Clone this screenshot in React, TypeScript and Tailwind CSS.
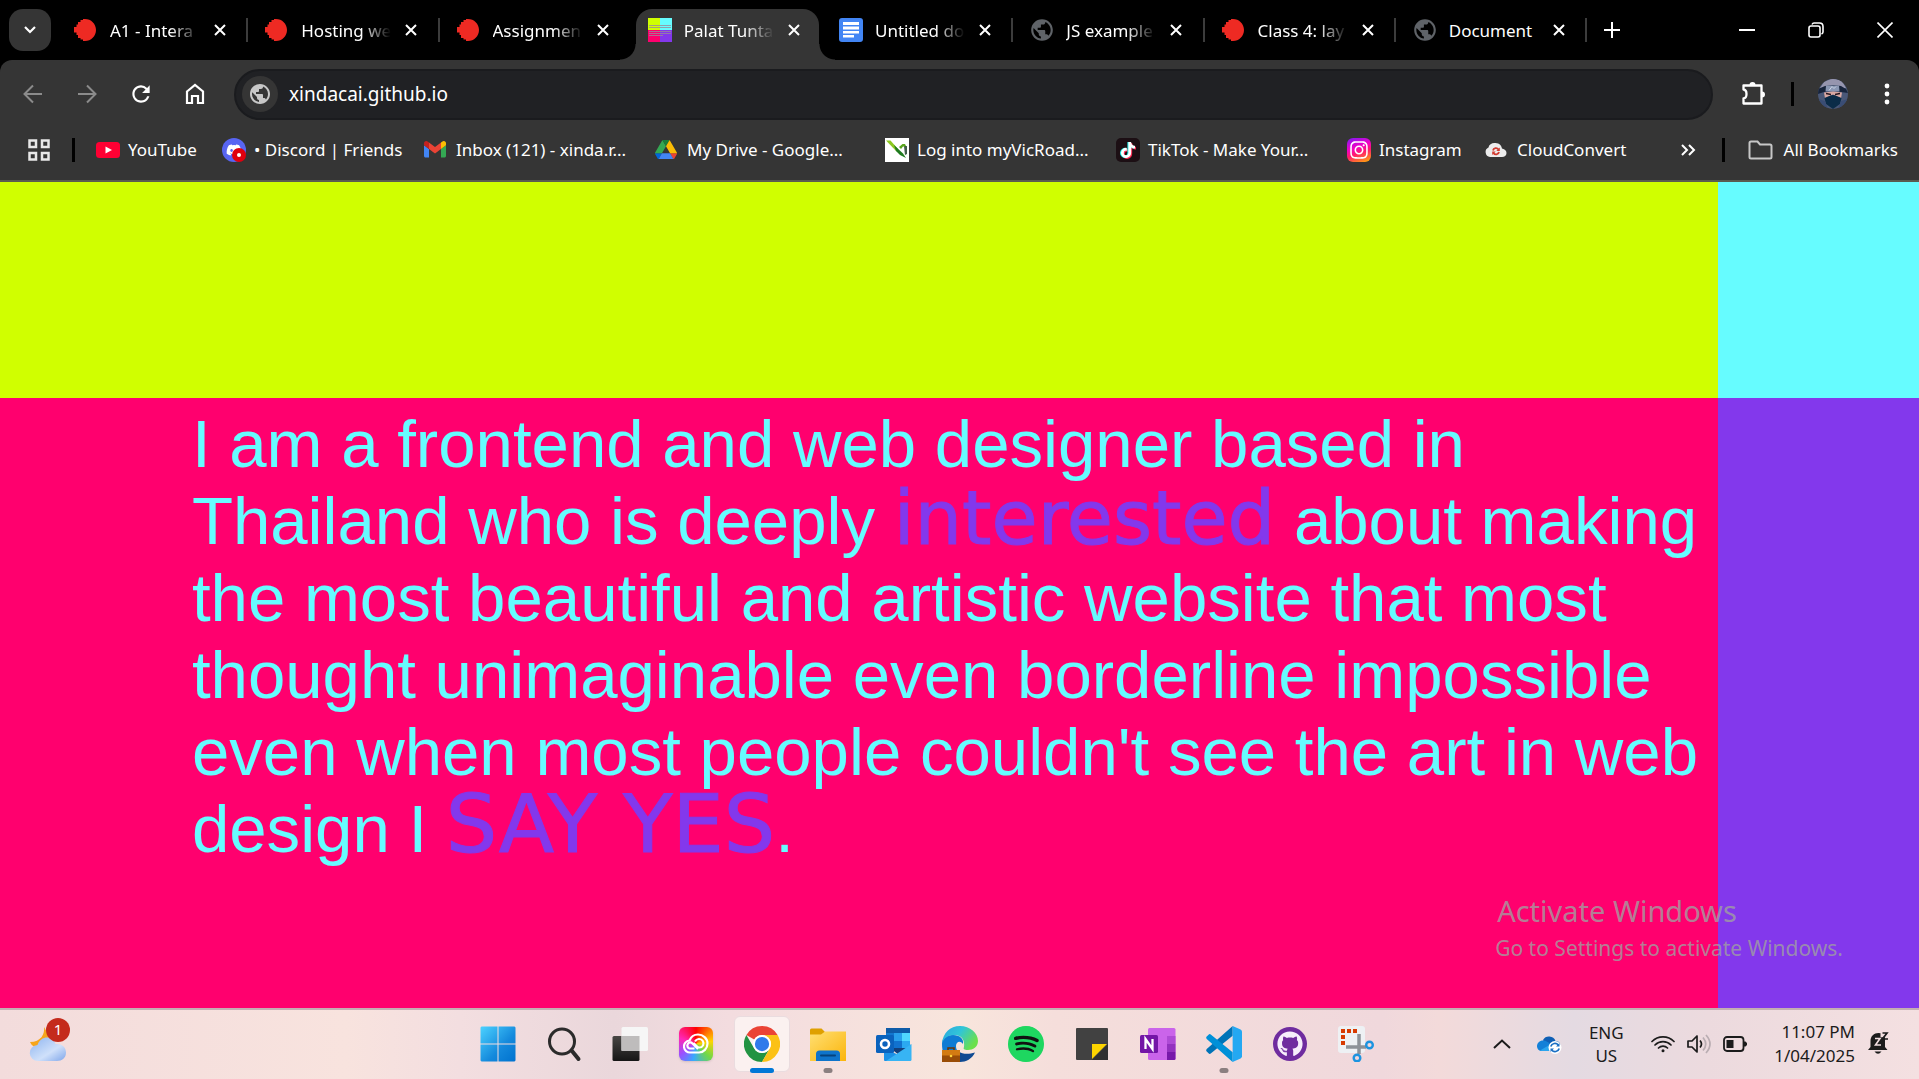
import type { ReactNode } from "react";
import { FaDiscord, FaGithub, FaInstagram, FaSpotify, FaTiktok } from "react-icons/fa";
import { MdPublic, MdRefresh } from "react-icons/md";

/* ---------- Tab favicons ---------- */

function RedBlob() {
  return (
    <svg viewBox="0 0 22 22" className="size-[22px]" aria-hidden="true">
      <path
        fill="#ee2a23"
        d="M11 0c6 0 11 4.900 11 11s-5 11-11 11h-2v-1.500H6.500V19H4v-3H2.500v-2.500H0V8h2.500V5.500H4V3h2.500V1H9V0z"
      />
    </svg>
  );
}

function PalatIcon() {
  return (
    <svg viewBox="0 0 24 24" className="size-6" aria-hidden="true">
      <path fill="#d0ff00" d="M0 0h12v12H0z" />
      <path fill="#66fcff" d="M12 0h12v12H12z" />
      <path fill="#ff006e" d="M0 12h12v12H0z" />
      <path fill="#8338ec" d="M12 12h12v12H12z" />
      <path stroke="#9a8a9a" strokeWidth="1" d="M1 7.500h22M1 9.500h22M1 13.500h22M1 15.500h22M1 17.500h14" opacity=".8" />
    </svg>
  );
}

function DocsIcon() {
  return (
    <svg viewBox="0 0 24 24" className="size-6" aria-hidden="true">
      <rect width="24" height="24" rx="3" fill="#4285f4" />
      <path fill="#fff" d="M4 4h16v3H4zM4 8.500h16v3H4zM4 13h16v2.500H4zM4 17h11v2.500H4z" />
    </svg>
  );
}

function GreyGlobe() {
  return <MdPublic className="-mx-px size-[26px] shrink-0 text-[#5f6368]" aria-hidden="true" />;
}

type Tab = { title: string; icon: ReactNode; active?: boolean; line?: boolean; short?: boolean };

const tabs: Tab[] = [
  { title: "A1 - Intera", icon: <RedBlob />, line: true },
  { title: "Hosting we", icon: <RedBlob />, line: true },
  { title: "Assignmen", icon: <RedBlob /> },
  { title: "Palat Tunta", icon: <PalatIcon />, active: true },
  { title: "Untitled do", icon: <DocsIcon />, line: true },
  { title: "JS example", icon: <GreyGlobe />, line: true },
  { title: "Class 4: lay", icon: <RedBlob />, line: true },
  { title: "Document", icon: <GreyGlobe />, line: true, short: true },
];

function TabItem({ tab }: { tab: Tab }) {
  return (
    <li className="relative flex h-full min-w-0 flex-1 items-end">
      <div
        className={
          tab.active
            ? "relative ml-[5px] mr-[3px] flex h-[51px] min-w-0 flex-1 items-center rounded-t-2xl bg-[#353535] pb-2.5 pl-3"
            : "relative ml-[5px] mr-[3px] flex h-[51px] min-w-0 flex-1 items-center pb-2.5 pl-3"
        }
      >
        {tab.active && (
          <>
            <span className="absolute -left-4 bottom-0 size-4 bg-[radial-gradient(circle_at_0_0,transparent_15px,#353535_16px)]" />
            <span className="absolute -right-4 bottom-0 size-4 bg-[radial-gradient(circle_at_100%_0,transparent_15px,#353535_16px)]" />
          </>
        )}
        <span className="flex w-6 shrink-0 items-center">{tab.icon}</span>
        <span
          className={
            tab.short
              ? "ml-3 mt-0.5 w-[92px] shrink-0 whitespace-nowrap text-[17px] leading-6 text-white"
              : "ml-3 mt-0.5 w-[92px] shrink-0 whitespace-nowrap text-[17px] leading-6 text-white [mask-image:linear-gradient(to_right,#000_60px,transparent_90px)]"
          }
        >
          {tab.title}
        </span>
        <button type="button" aria-label={`Close ${tab.title}`} className="ml-3 shrink-0">
          <svg viewBox="0 0 12 12" className="size-3" fill="none" stroke="#fff" aria-hidden="true">
            <path strokeWidth="2" d="M1 1l10 10M11 1L1 11" />
          </svg>
        </button>
      </div>
      {tab.line && <span className="absolute bottom-[18px] right-0 h-6 w-0.5 bg-[#3c3c3c]" />}
    </li>
  );
}

function TabStrip() {
  return (
    <div className="flex h-[60px] bg-black">
      <button
        type="button"
        aria-label="Search tabs"
        className="ml-[9px] mr-1.5 mt-[9px] flex size-[42px] shrink-0 items-center justify-center rounded-[14px] bg-[#353535]"
      >
        <svg viewBox="0 0 12 8" className="w-3" fill="none" stroke="#fff" strokeWidth="2.2" aria-hidden="true">
          <path d="M1 1l5 5 5-5" />
        </svg>
      </button>
      <ul className="flex w-[1530px] min-w-0">
        {tabs.map((t) => (
          <TabItem key={t.title} tab={t} />
        ))}
      </ul>
      <button type="button" aria-label="New tab" className="ml-[17px] flex w-5 items-center">
        <svg viewBox="0 0 16 16" className="w-4" stroke="#fff" strokeWidth="2" aria-hidden="true">
          <path d="M8 0v16M0 8h16" />
        </svg>
      </button>
      <div className="ml-auto flex w-[206px] shrink-0 text-white">
        <button type="button" aria-label="Minimize" className="flex flex-1 items-center justify-center">
          <svg viewBox="0 0 16 16" className="w-4" stroke="#fff" strokeWidth="2" aria-hidden="true">
            <path d="M0 8h16" />
          </svg>
        </button>
        <button type="button" aria-label="Restore" className="flex flex-1 items-center justify-center">
          <svg viewBox="0 0 16 16" className="w-4" fill="none" stroke="#fff" strokeWidth="1.600" aria-hidden="true">
            <rect x="1" y="4" width="11" height="11" rx="2" />
            <path d="M4 2.500C4.500 1.500 5 1 6 1h5.500C13.500 1 15 2.500 15 4.500V10c0 1-.5 1.500-1.500 2" />
          </svg>
        </button>
        <button type="button" aria-label="Close window" className="flex flex-1 items-center justify-center">
          <svg viewBox="0 0 16 16" className="w-4" fill="none" stroke="#fff" strokeWidth="1.600" aria-hidden="true">
            <path d="M.5.5l15 15M15.500.5l-15 15" />
          </svg>
        </button>
      </div>
    </div>
  );
}

/* ---------- Address row ---------- */

function Arrow({ back }: { back?: boolean }) {
  return (
    <svg viewBox="0 0 20 20" className="w-5" fill="none" stroke="#8b8b8b" strokeWidth="2" aria-hidden="true">
      <path d={back ? "M19 10H2M10 1.500L1.500 10l8.500 8.500" : "M1 10h17M10 1.500l8.500 8.500-8.500 8.500"} />
    </svg>
  );
}

function Avatar() {
  return (
    <svg viewBox="0 0 30 30" className="size-[30px]" aria-hidden="true">
      <defs>
        <clipPath id="avatar-clip">
          <circle cx="15" cy="15" r="15" />
        </clipPath>
      </defs>
      <g clipPath="url(#avatar-clip)">
        <path fill="#4a5878" d="M0 0h30v30H0z" />
        <path fill="#9695ae" d="M2 9L6 3l9-4 9 3 4 7-5 1-8-3-9 3z" />
        <path fill="#17243c" d="M0 10l7-3 8-1 8 1 5 3 2 4-7-1-8-1-9 1-6 2z" />
        <path fill="#8996b3" d="M8 6.500h13l.5 6H7.500z" />
        <path fill="none" stroke="#c9d3e4" d="M11 11.500l3-4 2 2 2-2" />
        <path fill="#d9a8a2" d="M6 13.500l9-1 9 1-1 6-8-4-8 4z" />
        <path fill="none" stroke="#2b1820" strokeWidth="1.300" d="M8 14.500l5 1M22 14.500l-5 1" />
        <path fill="#0b2c48" d="M6.500 19l6-2.500 2.500-.5 2.500.5 6 2.500-1.500 6-7 5-7-5z" />
        <path fill="#3a4d75" d="M0 20l7 2 3 8H0zM30 20l-7 2-3 8h10z" />
      </g>
    </svg>
  );
}

function AddressRow() {
  return (
    <div className="flex h-[69px] items-center pb-px">
      <div className="flex w-[234px] shrink-0 items-center pl-[23px]">
        <button type="button" aria-label="Back" className="w-[54px]">
          <Arrow back />
        </button>
        <button type="button" aria-label="Forward" className="w-[51px]">
          <Arrow />
        </button>
        <button type="button" aria-label="Reload" className="w-[57px]">
          <MdRefresh className="size-[26px] text-white" />
        </button>
        <button type="button" aria-label="Home">
          <svg viewBox="0 0 20 22" className="w-5" fill="none" stroke="#fff" strokeWidth="2.200" aria-hidden="true">
            <path d="M2 8.500L10 2l8 6.500V20h-5v-7H7v7H2z" />
          </svg>
        </button>
      </div>
      <div className="flex h-[51px] min-w-0 flex-1 items-center rounded-full border-2 border-[#1a1b1e] bg-[#202124] px-1.5">
        <span className="flex size-9 items-center justify-center rounded-full bg-[#353535]">
          <MdPublic className="size-6 text-[#c7c7c7]" aria-hidden="true" />
        </span>
        <input
          aria-label="Address"
          defaultValue="xindacai.github.io"
          className="ml-[11px] min-w-0 flex-1 bg-transparent text-[19px] leading-7 text-white outline-none"
        />
      </div>
      <div className="flex w-[206px] shrink-0 items-center pl-7">
        <button type="button" aria-label="Extensions">
          <svg viewBox="0 0 26 26" className="w-[26px]" fill="none" stroke="#fff" strokeWidth="2.300" aria-hidden="true">
            <path d="M2.500 4.500h18v18h-18V17.500c4-.5 4-8.500 0-9z" strokeLinejoin="round" />
            <path fill="#fff" stroke="none" d="M8.500 4a3 3 0 0 1 6 0zM21 10.500a3 3 0 0 1 0 6z" />
          </svg>
        </button>
        <span className="ml-6 h-6 w-[3px] bg-black" />
        <button type="button" aria-label="Profile" className="ml-6">
          <Avatar />
        </button>
        <button type="button" aria-label="Menu" className="ml-9">
          <svg viewBox="0 0 6 22" className="w-1.5" fill="#fff" aria-hidden="true">
            <circle cx="3" cy="3" r="2.400" />
            <circle cx="3" cy="11" r="2.400" />
            <circle cx="3" cy="19" r="2.400" />
          </svg>
        </button>
      </div>
    </div>
  );
}

/* ---------- Bookmarks ---------- */

const youtube = (
  <svg viewBox="0 0 24 24" className="size-6" aria-hidden="true">
    <rect y="4" width="24" height="16" rx="3.500" fill="#ff0033" />
    <path fill="#fff" d="M9.500 8.500l6.500 3.500-6.500 3.500z" />
  </svg>
);

const discord = (
  <span className="relative flex size-6 items-center justify-center rounded-full bg-[#5865f2]">
    <FaDiscord className="size-4 text-white" />
    <span className="absolute bottom-0 right-0 flex size-3.5 items-center justify-center rounded-full bg-[#e0000f]">
      <span className="size-1 rounded-full bg-white" />
    </span>
  </span>
);

const gmail = (
  <svg viewBox="52 42 88 66" className="w-[22px]" aria-hidden="true">
    <path fill="#4285f4" d="M58 108h14V74L52 59v43c0 3.320 2.690 6 6 6" />
    <path fill="#34a853" d="M120 108h14c3.320 0 6-2.690 6-6V59l-20 15" />
    <path fill="#fbbc04" d="M120 48v26l20-15v-8c0-7.420-8.470-11.650-14.400-7.200" />
    <path fill="#ea4335" d="M72 74V48l24 18 24-18v26L96 92" />
    <path fill="#c5221f" d="M52 51v8l20 15V48l-5.600-4.200C60.460 39.350 52 43.580 52 51" />
  </svg>
);

const drive = (
  <svg viewBox="0 0 87.3 78" className="w-[22px]" aria-hidden="true">
    <path fill="#0066da" d="M6.600 66.850l3.850 6.650c.8 1.400 1.950 2.500 3.300 3.300L27.500 53H0c0 1.550.4 3.100 1.200 4.500z" />
    <path fill="#34a853" d="M43.650 25L29.900 1.200c-1.350.8-2.500 1.900-3.300 3.300L1.200 48.500C.4 49.900 0 51.450 0 53h27.500z" />
    <path fill="#ea4335" d="M73.550 76.800c1.350-.8 2.500-1.900 3.300-3.300l1.600-2.750 7.650-13.250c.8-1.400 1.200-2.950 1.200-4.500H59.800l5.850 11.500z" />
    <path fill="#188038" d="M43.650 25L57.400 1.200C56.050.4 54.500 0 52.900 0H34.400c-1.600 0-3.150.45-4.500 1.200z" />
    <path fill="#4285f4" d="M59.800 53H27.500L13.750 76.800c1.350.8 2.900 1.200 4.500 1.200h50.800c1.600 0 3.150-.45 4.500-1.200z" />
    <path fill="#fbbc04" d="M73.400 26.500L60.700 4.500c-.8-1.400-1.950-2.500-3.300-3.300L43.650 25 59.800 53h27.450c0-1.550-.4-3.100-1.200-4.500z" />
  </svg>
);

const vicroads = (
  <svg viewBox="0 0 24 24" className="size-6" aria-hidden="true">
    <path fill="#fff" d="M0 0h24v24H0z" />
    <path fill="#8cc81f" d="M1 2.500h4.500L13 11l-1.500 2.500z" />
    <path fill="#1f7a1f" d="M9 7l9 8.500 3 4.500-6-3-4-4z" />
    <path fill="#5aa51e" d="M14 9l3.500-3H20l1.500 3-3.500-.5-2 2.500z" />
    <path fill="#13351f" d="M19 8.500l3-.5v8l-2 1z" opacity=".8" />
  </svg>
);

const tiktok = (
  <span className="relative flex size-6 items-center justify-center rounded-[5px] bg-[#1c0f14]">
    <FaTiktok className="absolute size-4 translate-x-px translate-y-px text-[#fe2c55]" />
    <FaTiktok className="absolute size-4 -translate-x-px text-[#25f4ee]" />
    <FaTiktok className="relative size-4 text-white" />
  </span>
);

const instagram = (
  <span className="flex size-6 items-center justify-center rounded-md bg-[linear-gradient(160deg,#7a1cf5_0%,#f000c8_38%,#ff1a6c_60%,#ffb400_100%)]">
    <FaInstagram className="size-5 text-white" />
  </span>
);

const cloudconvert = (
  <svg viewBox="0 0 24 24" className="-ml-px size-6" aria-hidden="true">
    <path fill="#ececec" d="M6 19a5 5 0 0 1-1.500-9.500C5 6 8.500 4.500 11.500 5c4 .2 6 2.500 6.500 5.500 3 .5 4.500 2.500 4.500 4.500 0 2.500-2 4-4.500 4z" />
    <path fill="none" stroke="#d13b30" strokeWidth="1.800" d="M9 12.500a3 3 0 0 1 5.500-1M15 14a3 3 0 0 1-5.500 1" />
    <path fill="#d13b30" d="M15.800 9.500v3.500h-3.500zM8.200 17v-3.500h3.500z" />
  </svg>
);

const bookmarks = [
  { label: "YouTube", icon: youtube, width: "w-[126px]" },
  { label: "• Discord | Friends", icon: discord, width: "w-[202px]" },
  { label: "Inbox (121) - xinda.r...", icon: gmail, width: "w-[231px]" },
  { label: "My Drive - Google...", icon: drive, width: "w-[230px]" },
  { label: "Log into myVicRoad...", icon: vicroads, width: "w-[231px]" },
  { label: "TikTok - Make Your...", icon: tiktok, width: "w-[231px]" },
  { label: "Instagram", icon: instagram, width: "w-[138px]" },
  { label: "CloudConvert", icon: cloudconvert, width: "w-[150px]" },
];

function BookmarkBar() {
  return (
    <nav aria-label="Bookmarks" className="flex h-[51px] items-center pb-2.5 pl-7 pr-[21px] text-[17px] leading-6 text-white">
      <button type="button" aria-label="Apps">
        <svg viewBox="0 0 22 22" className="w-[22px]" fill="none" stroke="#e8e8e8" strokeWidth="2.500" aria-hidden="true">
          <path d="M1.500 1.500h6.500v6.500H1.500zM14 1.500h6.500v6.500H14zM1.500 14h6.500v6.500H1.500zM14 14h6.500v6.500H14z" />
        </svg>
      </button>
      <span className="ml-[22px] mr-[21px] h-6 w-[3px] bg-black" />
      <div className="flex min-w-0">
        {bookmarks.map((b) => (
          <a key={b.label} href="#" className={`flex shrink-0 items-center gap-2 whitespace-nowrap ${b.width}`}>
            <span className="flex w-6 shrink-0 items-center">{b.icon}</span>
            {b.label}
          </a>
        ))}
      </div>
      <button type="button" aria-label="More bookmarks" className="ml-auto">
        <svg viewBox="0 0 15 12" className="w-[15px]" fill="none" stroke="#fff" strokeWidth="2" aria-hidden="true">
          <path d="M1 1l5 5-5 5M8 1l5 5-5 5" />
        </svg>
      </button>
      <span className="ml-[26px] h-6 w-[3px] bg-black" />
      <button type="button" className="ml-[23px] flex items-center gap-[11px]">
        <svg viewBox="0 0 25 20" className="w-[25px]" fill="none" stroke="#c7c7c7" strokeWidth="2" aria-hidden="true">
          <path d="M1.500 3q0-1.500 1.500-1.500h6.500L12 4.500h10q1.500 0 1.500 1.500v11q0 1.500-1.500 1.500H3q-1.500 0-1.500-1.500z" />
        </svg>
        All Bookmarks
      </button>
    </nav>
  );
}

/* ---------- Web page ---------- */

function PalatPage() {
  return (
    <main className="relative grid flex-1 grid-cols-[1718fr_201fr] grid-rows-[216px_1fr]">
      <div className="bg-[#d0ff00]" />
      <div className="bg-[#66fcff]" />
      <div className="bg-[#ff006e] pl-[10vw] pt-[7px]">
        <p className="font-['Liberation_Sans',Arial,sans-serif] text-[3.5vw] leading-[77px] text-[#66fcff]">
          I am a frontend and web designer based in Thailand who is deeply{" "}
          <span className="font-['DejaVu_Sans',sans-serif] text-[75px] leading-[50px] text-[#8338ec] [-webkit-text-stroke:1px_#8338ec]">
            interested
          </span>{" "}
          about making the most beautiful and artistic website that most thought unimaginable even borderline
          impossible even when most people couldn't see the art in web design I{" "}
          <span className="font-['DejaVu_Sans',sans-serif] text-[81px] leading-[50px] text-[#8338ec] [-webkit-text-stroke:1px_#8338ec]">
            SAY YES
          </span>
          .
        </p>
      </div>
      <div className="bg-[#8338ec]" />
      <div className="absolute bottom-[44px] right-[76px] text-[#a0a0a0]/80">
        <p className="mb-[3px] pl-0.5 text-[29px] leading-9">Activate Windows</p>
        <p className="text-[21px] leading-8">Go to Settings to activate Windows.</p>
      </div>
    </main>
  );
}

/* ---------- Taskbar ---------- */

const startIcon = (
  <svg viewBox="0 0 36 36" className="size-9">
    <defs>
      <linearGradient id="win" x1="0" y1="0" x2="1" y2="1">
        <stop offset="0" stopColor="#4cd2ff" />
        <stop offset=".6" stopColor="#1489dc" />
        <stop offset="1" stopColor="#0072cf" />
      </linearGradient>
    </defs>
    <path fill="url(#win)" d="M1.500.5H17.500v17H.5v-16zM18.500.5h16l1 1v16h-17zM.5 18.500h17v17h-16l-1-1zM18.500 18.500h17v16l-1 1h-16z" />
  </svg>
);

const searchIcon = (
  <svg viewBox="0 0 36 36" className="size-9" fill="none" stroke="#2b2b2b">
    <circle cx="16" cy="15.500" r="12.500" strokeWidth="3" />
    <path strokeWidth="4" strokeLinecap="round" d="M26 25l6.500 8" />
  </svg>
);

const taskViewIcon = (
  <svg viewBox="0 0 36 36" className="size-9">
    <defs>
      <linearGradient id="tv" x1="0" y1="0" x2="0" y2="1">
        <stop offset="0" stopColor="#484644" />
        <stop offset="1" stopColor="#151515" />
      </linearGradient>
    </defs>
    <rect x=".5" y="10" width="27" height="25" rx="1.500" fill="url(#tv)" />
    <rect x="9.500" y="1" width="26.500" height="24" rx="1.500" fill="#f6f6f6" />
    <path fill="#bebcbc" d="M9.500 10h18v15h-18z" />
  </svg>
);

const ccIcon = (
  <span className="flex size-[34px] items-center justify-center rounded-md bg-[conic-gradient(from_0deg,#ff0000,#ffd500_80deg,#6fd84a_135deg,#38a8ff_190deg,#9a50ff_235deg,#ff27b8_290deg,#ff0000)] shadow-sm">
    <svg viewBox="0 0 26 22" className="w-[26px]" fill="none" stroke="#fff" strokeWidth="2.200">
      <path d="M7.500 19.500A6 6 0 0 1 6.500 7.500C8 3.500 11 1.500 15 1.500c5 0 9.500 4 9.500 9s-4 9-8.500 9z" />
      <path d="M15 16L9.500 10.500C8 9 6 9 4.800 11s0 4 1.700 4.500h5M12 8.500c1.500-3 6-3.500 7.800-.5s0 6.500-3.300 6.500c-1.500 0-2-.5-3-1.500l-3-3" />
    </svg>
  </span>
);

const chromeIcon = (
  <svg viewBox="0 0 48 48" className="size-9">
    <path fill="#ea4335" d="M24 0a24 24 0 0 1 20.800 12H24a12 12 0 0 0-10.400 6L3.200 12A24 24 0 0 1 24 0z" />
    <path fill="#229342" d="M3.200 12a24 24 0 0 0 20.800 36l10.400-18a12 12 0 0 1-20.800 0z" />
    <path fill="#fbc116" d="M44.800 12A24 24 0 0 1 24 48l10.400-18A12 12 0 0 0 24 12z" />
    <circle cx="24" cy="24" r="12" fill="#fff" />
    <circle cx="24" cy="24" r="9.500" fill="#2f7aea" />
  </svg>
);

const explorerIcon = (
  <svg viewBox="0 0 36 36" className="size-9">
    <defs>
      <linearGradient id="fold" x1="0" y1="0" x2="1" y2="1">
        <stop offset="0" stopColor="#ffdf73" />
        <stop offset="1" stopColor="#fbb50b" />
      </linearGradient>
    </defs>
    <path fill="#dfa000" d="M0 4q0-1.500 1.500-1.500h10L15 6v5H0z" />
    <path fill="url(#fold)" d="M0 8.500h11L15 5.500h21V35H0z" />
    <path fill="#0f74cb" d="M6 35V28q0-3.500 3.500-3.500h17Q30 24.500 30 28v7z" />
    <path stroke="#06427d" strokeWidth="2" strokeLinecap="round" d="M11 29.500h14" />
  </svg>
);

const outlookIcon = (
  <svg viewBox="0 0 36 36" className="size-9">
    <path fill="#0e5ba8" d="M10 2h24v6H10z" />
    <path fill="#1377cf" d="M10 7h8v16h-8z" />
    <path fill="#28a0ec" d="M18 7h8v8h-8z" />
    <path fill="#4fd8ff" d="M26 7h8v8h-8z" />
    <path fill="#1172cf" d="M18 15h8v8h-8z" />
    <path fill="#2ba9f0" d="M26 15h8v8h-8z" />
    <path fill="#12407c" d="M14 22h20l1-4v6l-12 5z" />
    <path fill="#1b90e6" d="M8 22l27 13H9q-1 0-1-1z" />
    <path fill="#37b4f4" d="M35.500 18v15.500q0 1.500-1.500 1.500H10z" />
    <rect y="9" width="18" height="18" rx="1.500" fill="#0a62bd" />
    <circle cx="9" cy="18" r="4" fill="none" stroke="#fff" strokeWidth="2.600" />
  </svg>
);

const edgeIcon = (
  <svg viewBox="0 0 36 36" className="size-9">
    <defs>
      <linearGradient id="edge-top" x1="0" y1="0" x2="1" y2=".5">
        <stop offset="0" stopColor="#2aa5e0" />
        <stop offset=".5" stopColor="#31c5d8" />
        <stop offset="1" stopColor="#6be04b" />
      </linearGradient>
    </defs>
    <path fill="#0f4a92" d="M12 20c2 6 10 10 21 6.500C30 33 24 36 18 36c-6 0-10-3-12-8z" />
    <path fill="#0f7bd4" d="M0 18C0 11 6 8.500 11 9c7 0 11 4 10 9-3-4-7-2-7 2 0 2 .5 4 2 6L2 28c-1.500-3-2-6-2-10z" />
    <path fill="url(#edge-top)" d="M0 17C1 7 8 0 18 0c10 0 18 7 18 15 0 6-5 9-10 9-4 0-5-1-4-3 1-7-2-12-10-12-6 0-10 3-12 8z" />
    <path fill="#d37b12" d="M0 24h18v12H0z" />
    <path fill="#9a4d07" d="M0 29.500h18V36H0z" />
    <path fill="none" stroke="#6b3404" strokeWidth="1.500" d="M6 24v-2h6v2" />
    <circle cx="9" cy="30" r="1.300" fill="#ffd23a" />
  </svg>
);

const spotifyIcon = (
  <span className="flex size-9 items-center justify-center rounded-full bg-[radial-gradient(circle,#111_60%,#1ed760_62%)]">
    <FaSpotify className="size-9 text-[#1ed760]" />
  </span>
);

const notesIcon = (
  <svg viewBox="0 0 36 36" className="size-9">
    <rect x="2" y="2" width="32" height="32" rx="1" fill="#414141" />
    <path fill="#303030" d="M18 34l16-16v16z" />
    <path fill="#fdd400" d="M18 18h15L18 33z" />
  </svg>
);

const onenoteIcon = (
  <svg viewBox="0 0 36 36" className="size-9">
    <rect x="8" y="2" width="27.500" height="32" rx="1.500" fill="#ca64ea" />
    <path fill="#ae4bd5" d="M27 10h8.500v8H27z" />
    <path fill="#9332bf" d="M27 18h8.500v8H27z" />
    <path fill="#7719aa" d="M27 26h8.500v6.500q0 1.500-1.500 1.500h-7z" />
    <rect y="9" width="18" height="18" rx="1.500" fill="#7316a6" />
    <path fill="none" stroke="#fff" strokeWidth="2.300" d="M5.500 23V13l7 10V13" />
  </svg>
);

const vscodeIcon = (
  <svg viewBox="0 0 100 100" className="size-9">
    <path fill="#0073b7" d="M74 0L2 64q-3 4 0 7l5 5q3 3 7 0L74 27z" />
    <path fill="#0090d8" d="M74 100L2 36q-3-4 0-7l5-5q3-3 7 0L74 73z" />
    <path fill="#24a8f2" d="M74 0l22 10q4 2 4 6v68q0 4-4 6L74 100z" />
  </svg>
);

const githubIcon = (
  <span className="flex size-[34px] items-center justify-center rounded-full bg-[#6f2c9f]">
    <FaGithub className="size-[26px] text-[#f6eefb]" />
  </span>
);

const snipIcon = (
  <svg viewBox="0 0 36 36" className="size-9">
    <rect width="27" height="27" rx="3" fill="#eef1f4" />
    <path fill="none" stroke="#d83b01" strokeWidth="4" strokeDasharray="4 2" d="M19 5H5v14" />
    <path fill="none" stroke="#8d9298" strokeWidth="3.500" d="M21 8v20M8 21h20" />
    <circle cx="31.500" cy="19" r="3.300" fill="none" stroke="#1c94e0" strokeWidth="2.400" />
    <circle cx="19" cy="32" r="3.300" fill="none" stroke="#1c94e0" strokeWidth="2.400" />
  </svg>
);

const apps: { name: string; icon: ReactNode; state?: "active" | "running" }[] = [
  { name: "Start", icon: startIcon },
  { name: "Search", icon: searchIcon },
  { name: "Task view", icon: taskViewIcon },
  { name: "Creative Cloud", icon: ccIcon },
  { name: "Chrome", icon: chromeIcon, state: "active" },
  { name: "File Explorer", icon: explorerIcon, state: "running" },
  { name: "Outlook", icon: outlookIcon },
  { name: "Edge", icon: edgeIcon },
  { name: "Spotify", icon: spotifyIcon },
  { name: "Sticky Notes", icon: notesIcon },
  { name: "OneNote", icon: onenoteIcon },
  { name: "Visual Studio Code", icon: vscodeIcon, state: "running" },
  { name: "GitHub Desktop", icon: githubIcon },
  { name: "Snipping Tool", icon: snipIcon },
];

function Tray() {
  return (
    <div className="ml-auto flex shrink-0 items-center text-[17px] leading-6 text-[#1b1b1b]">
      <button type="button" aria-label="Show hidden icons">
        <svg viewBox="0 0 18 10" className="w-[18px]" fill="none" stroke="#1b1b1b" strokeWidth="2" aria-hidden="true">
          <path d="M1 9l8-7.500L17 9" />
        </svg>
      </button>
      <button type="button" aria-label="OneDrive" className="ml-[26px]">
        <svg viewBox="0 0 25 20" className="w-[25px]" aria-hidden="true">
          <path fill="#0f5fb5" d="M6 6a7 7 0 0 1 12.500 1c3 0 5 2 5 5L9 12z" />
          <path fill="#1380d8" d="M0 12c0-3 2.500-5.500 6-5.500 3 0 6 2 10 5L10 17H5c-3 0-5-2-5-5z" />
          <path fill="#2ba5ee" d="M3 16.500L14 10l5 3v4H5z" />
          <circle cx="18" cy="13.500" r="6.500" fill="#fff" />
          <path fill="none" stroke="#1a6fc4" strokeWidth="1.700" d="M13.800 12.500a4.300 4.300 0 0 1 7.500-1.500M22.200 14.500a4.300 4.300 0 0 1-7.500 1.500" />
          <path fill="#1a6fc4" d="M22.500 9v3.500H19zM13.500 18v-3.500H17z" />
        </svg>
      </button>
      <button type="button" className="ml-6 w-10 text-center leading-[23px]">
        ENG
        <br />
        US
      </button>
      <button type="button" aria-label="Network, volume and battery" className="ml-[25px] flex items-center gap-3">
        <svg viewBox="0 0 24 18" className="w-6" fill="none" stroke="#1b1b1b" strokeWidth="1.700" strokeLinecap="round" aria-hidden="true">
          <path d="M1 6.500a15.500 15.500 0 0 1 22 0M4 10a11.300 11.300 0 0 1 16 0M7.500 13a6.500 6.500 0 0 1 9 0" />
          <circle cx="12" cy="15.800" r="1.500" fill="#1b1b1b" stroke="none" />
        </svg>
        <svg viewBox="0 0 24 20" className="w-6" fill="none" stroke="#1b1b1b" strokeWidth="1.700" aria-hidden="true">
          <path d="M1 7h4l5-5v16l-5-5H1z" strokeLinejoin="round" />
          <path d="M13 6.500q3 3.500 0 7" />
          <path stroke="#b9adb2" d="M16 3.500q5.500 6.500 0 13M19 1q8 9 0 18" />
        </svg>
        <svg viewBox="0 0 24 16" className="w-6" aria-hidden="true">
          <rect x="1" y="1" width="19.500" height="14" rx="3" fill="none" stroke="#1b1b1b" strokeWidth="1.800" />
          <path fill="#1b1b1b" d="M3.500 4h7v8h-7zM21 5.500h1.500L24 7v2l-1.500 1.500H21z" />
        </svg>
      </button>
      <button type="button" className="ml-[27px] text-right">
        11:07 PM
        <br />
        1/04/2025
      </button>
      <button type="button" aria-label="Notifications" className="ml-[13px] mr-[29px]">
        <svg viewBox="0 0 22 23" className="w-[22px]" aria-hidden="true">
          <path fill="#1b1b1b" d="M2.500 15V9c0-5 3.500-8 8-8l2 .3v4H17V15l2.500 3H0zM6.500 19.500h7q-3.500 4.500-7 0z" />
          <path fill="none" stroke="#1b1b1b" strokeWidth="1.700" d="M14.500 1H19l-4.500 6H20" />
          <path fill="none" stroke="#f0dde0" strokeWidth="1.600" d="M7 6.500h5L7.500 13H13" />
        </svg>
      </button>
    </div>
  );
}

function Taskbar() {
  return (
    <footer className="flex h-[71px] shrink-0 items-center border-t-2 border-[#c4aeb2] bg-[linear-gradient(90deg,#f3dcdc_0%,#f8e3de_18%,#f3dee0_24%,#ead7db_32%,#f3dcdf_38%,#f8e5dc_50%,#f5dedb_55%,#f0d8dc_72%,#f3dada_75%,#e4dae2_82%,#ecdade_89%,#f4e0e1_100%)] pb-0.5">
      <div className="w-[465px] min-w-0 pl-7">
        <button type="button" aria-label="Weather" className="relative block">
          <svg viewBox="0 0 42 54" className="w-[42px]" aria-hidden="true">
            <defs>
              <linearGradient id="cloud" x1="0" y1="0" x2="1" y2="1">
                <stop offset="0" stopColor="#8db4f0" />
                <stop offset=".6" stopColor="#cfe0fa" />
                <stop offset="1" stopColor="#7fa6ea" />
              </linearGradient>
            </defs>
            <path fill="#f6a51c" d="M16 10c1 7-3 15-14 15 2 5 7 7 13 5l8-8z" />
            <path fill="url(#cloud)" d="M10 44a8 8 0 0 1-.5-16C11 23 15 20.500 19 20.500c4 0 7.500 2.500 8.500 6.500 6-.5 10.500 3 10.500 8.500S34 44 29 44z" />
          </svg>
          <span className="absolute left-[18px] top-px flex size-6 items-center justify-center rounded-full bg-[#c42b1c] text-[15px] leading-none text-white">
            1
          </span>
        </button>
      </div>
      <ul className="flex">
        {apps.map((a) => (
          <li key={a.name} className="flex w-[66px] justify-center">
            <button
              type="button"
              aria-label={a.name}
              className={
                a.state === "active"
                  ? "relative flex size-14 items-center justify-center rounded-md border border-[#eadcdf] bg-[#fbf1f0]"
                  : "relative flex size-14 items-center justify-center"
              }
            >
              {a.icon}
              {a.state === "active" && (
                <span className="absolute -bottom-0.5 left-1/2 h-[5px] w-6 -translate-x-1/2 rounded-full bg-[#0078d7]" />
              )}
              {a.state === "running" && (
                <span className="absolute -bottom-px left-1/2 h-[5px] w-[9px] -translate-x-1/2 rounded-full bg-[#8b7f80]" />
              )}
            </button>
          </li>
        ))}
      </ul>
      <Tray />
    </footer>
  );
}

export default function App() {
  return (
    <div className="flex min-h-screen flex-col bg-black font-['Noto_Sans','Open_Sans',sans-serif]">
      <header>
        <TabStrip />
        <div className="rounded-t-xl border-b-2 border-[#5a5c50] bg-[#353535]">
          <AddressRow />
          <BookmarkBar />
        </div>
      </header>
      <PalatPage />
      <Taskbar />
    </div>
  );
}
